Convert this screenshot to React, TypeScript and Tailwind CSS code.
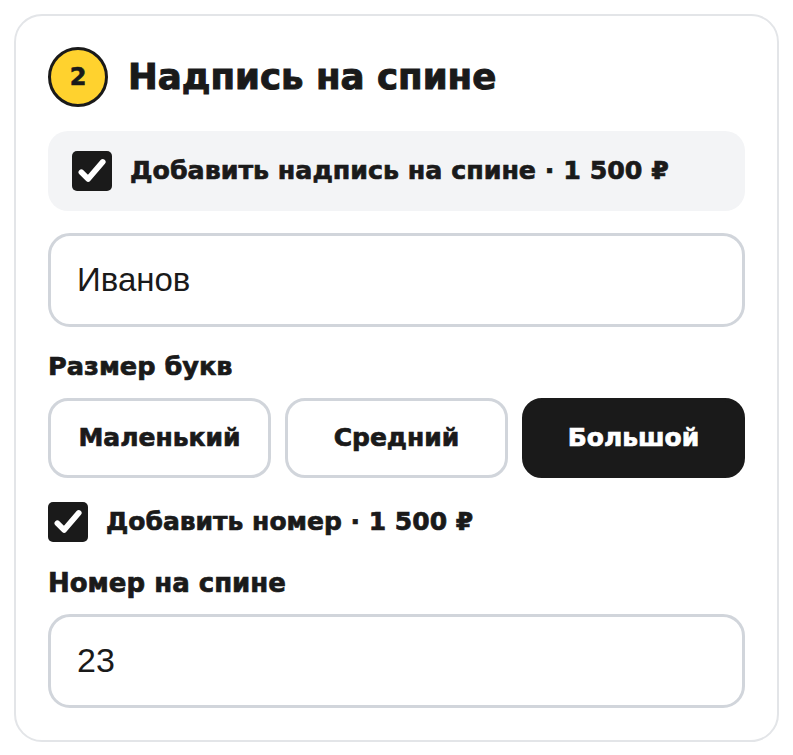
import React, { useState } from "react";

function CheckBox({ checked }: { checked: boolean }) {
  return (
    <span className="flex h-10 w-10 shrink-0 items-center justify-center rounded-[5px] bg-[#1a1a1a]">
      {checked && (
        <svg viewBox="0 0 24 24" className="h-[34px] w-[34px]" fill="none">
          <path d="M4.5 12.8l4.8 4.8L19.6 5.6" stroke="#fff" strokeWidth="4" strokeLinecap="round" strokeLinejoin="round" />
        </svg>
      )}
    </span>
  );
}

const sizes = ["Маленький", "Средний", "Большой"];

export default function App() {
  const [size, setSize] = useState("Большой");
  const [name, setName] = useState("Иванов");
  const [num, setNum] = useState("23");

  return (
    <div className="min-h-screen bg-white p-[14px] text-[#1a1a1a] font-['DejaVu_Sans',sans-serif]">
      <div className="rounded-[28px] border-2 border-[#e3e5e8] px-[32px] pt-[31px] pb-[32px]">
        <div className="flex items-center gap-5">
          <span className="flex h-[60px] w-[60px] items-center justify-center rounded-full border-[3px] border-[#1a1a1a] bg-[#ffd22e] text-[24px] font-bold [-webkit-text-stroke:0.6px]">
            2
          </span>
          <h2 className="text-[35.6px] font-bold leading-none [-webkit-text-stroke:1px]">Надпись на спине</h2>
        </div>

        <label className="mt-6 flex h-20 items-center gap-[18px] rounded-[20px] bg-[#f3f4f6] px-6">
          <CheckBox checked />
          <span className="text-[25.3px] font-bold [-webkit-text-stroke:0.7px]">Добавить надпись на спине · 1 500 ₽</span>
        </label>

        <input
          value={name}
          onChange={(e) => setName(e.target.value)}
          className="mt-[22px] h-[94px] w-full rounded-[22px] border-[3px] border-[#d1d5db] bg-white px-[26px] text-[33px] outline-none font-['Liberation_Sans',sans-serif]"
        />

        <div className="mt-[27px] text-[25.6px] font-bold leading-none [-webkit-text-stroke:0.7px]">Размер букв</div>

        <div className="mt-[18px] grid grid-cols-3 gap-[14px]">
          {sizes.map((s) => (
            <button
              key={s}
              onClick={() => setSize(s)}
              className={
                size === s
                  ? "h-20 rounded-[20px] border-[3px] border-[#1a1a1a] bg-[#1a1a1a] text-[25px] font-bold text-white [-webkit-text-stroke:0.7px]"
                  : "h-20 rounded-[20px] border-[3px] border-[#d1d5db] bg-white text-[25px] font-bold [-webkit-text-stroke:0.7px]"
              }
            >
              {s}
            </button>
          ))}
        </div>

        <label className="mt-6 flex items-center gap-[18px]">
          <CheckBox checked />
          <span className="text-[25px] font-bold [-webkit-text-stroke:0.7px]">Добавить номер · 1 500 ₽</span>
        </label>

        <div className="mt-[28px] text-[26px] font-bold leading-none [-webkit-text-stroke:0.7px]">Номер на спине</div>

        <input
          value={num}
          onChange={(e) => setNum(e.target.value)}
          className="mt-[18px] h-[94px] w-full rounded-[22px] border-[3px] border-[#d1d5db] bg-white px-[26px] text-[34px] outline-none font-['Liberation_Sans',sans-serif]"
        />
      </div>
    </div>
  );
}
